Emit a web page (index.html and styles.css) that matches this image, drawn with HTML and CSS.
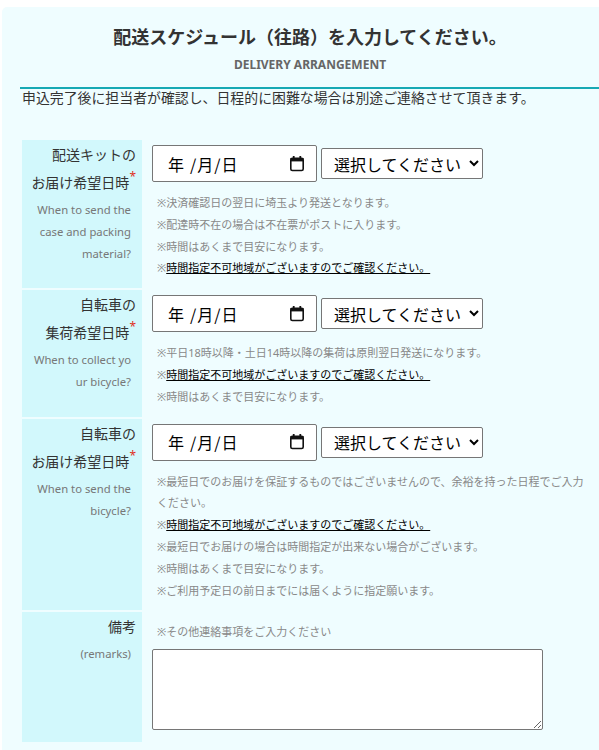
FILE: index.html
```html
<!DOCTYPE html>
<html lang="ja">
<head>
<meta charset="utf-8">
<title>配送スケジュール</title>
<link rel="stylesheet" href="styles.css">
</head>
<body>
<div class="panel">
  <header class="head">
    <h2 class="title">配送スケジュール（往路）を入力してください。</h2>
    <p class="sub">DELIVERY ARRANGEMENT</p>
  </header>
  <p class="intro">申込完了後に担当者が確認し、日程的に困難な場合は別途ご連絡させて頂きます。</p>

  <div class="rows">
    <div class="row">
      <div class="label">
        <p class="ja">配送キットの<br>お届け希望日時<span class="req">*</span></p>
        <p class="en">When to send the<br>case and packing<br>material?</p>
      </div>
      <div class="field">
        <div class="controls">
          <div class="date" role="textbox"><span class="date-text"><span class="seg seg-y">年</span><span class="slash">/</span><span class="seg">月</span><span class="slash">/</span><span class="seg">日</span></span><svg class="cal" viewBox="0 0 16 17" width="16" height="17"><rect x="1.8" y="3.3" width="12.4" height="12.2" rx="1.6" fill="none" stroke="#111" stroke-width="1.6"/><rect x="1.5" y="3" width="13" height="3.4" fill="#111"/><rect x="3.8" y="1" width="1.8" height="3" fill="#111"/><rect x="10.4" y="1" width="1.8" height="3" fill="#111"/></svg></div>
          <select class="sel"><option>選択してください</option></select>
        </div>
        <ul class="notes">
          <li>※決済確認日の翌日に埼玉より発送となります。</li>
          <li>※配達時不在の場合は不在票がポストに入ります。</li>
          <li>※時間はあくまで目安になります。</li>
          <li>※<a class="link" href="#">時間指定不可地域がございますのでご確認ください。 </a></li>
        </ul>
      </div>
    </div>

    <div class="row">
      <div class="label">
        <p class="ja">自転車の<br>集荷希望日時<span class="req">*</span></p>
        <p class="en">When to collect yo<br>ur bicycle?</p>
      </div>
      <div class="field">
        <div class="controls">
          <div class="date" role="textbox"><span class="date-text"><span class="seg seg-y">年</span><span class="slash">/</span><span class="seg">月</span><span class="slash">/</span><span class="seg">日</span></span><svg class="cal" viewBox="0 0 16 17" width="16" height="17"><rect x="1.8" y="3.3" width="12.4" height="12.2" rx="1.6" fill="none" stroke="#111" stroke-width="1.6"/><rect x="1.5" y="3" width="13" height="3.4" fill="#111"/><rect x="3.8" y="1" width="1.8" height="3" fill="#111"/><rect x="10.4" y="1" width="1.8" height="3" fill="#111"/></svg></div>
          <select class="sel"><option>選択してください</option></select>
        </div>
        <ul class="notes">
          <li>※平日18時以降・土日14時以降の集荷は原則翌日発送になります。</li>
          <li>※<a class="link" href="#">時間指定不可地域がございますのでご確認ください。 </a></li>
          <li>※時間はあくまで目安になります。</li>
        </ul>
      </div>
    </div>

    <div class="row">
      <div class="label">
        <p class="ja">自転車の<br>お届け希望日時<span class="req">*</span></p>
        <p class="en">When to send the<br>bicycle?</p>
      </div>
      <div class="field">
        <div class="controls">
          <div class="date" role="textbox"><span class="date-text"><span class="seg seg-y">年</span><span class="slash">/</span><span class="seg">月</span><span class="slash">/</span><span class="seg">日</span></span><svg class="cal" viewBox="0 0 16 17" width="16" height="17"><rect x="1.8" y="3.3" width="12.4" height="12.2" rx="1.6" fill="none" stroke="#111" stroke-width="1.6"/><rect x="1.5" y="3" width="13" height="3.4" fill="#111"/><rect x="3.8" y="1" width="1.8" height="3" fill="#111"/><rect x="10.4" y="1" width="1.8" height="3" fill="#111"/></svg></div>
          <select class="sel"><option>選択してください</option></select>
        </div>
        <ul class="notes">
          <li>※最短日でのお届けを保証するものではございませんので、余裕を持った日程でご入力ください。</li>
          <li>※<a class="link" href="#">時間指定不可地域がございますのでご確認ください。 </a></li>
          <li>※最短日でお届けの場合は時間指定が出来ない場合がございます。</li>
          <li>※時間はあくまで目安になります。</li>
          <li>※ご利用予定日の前日までには届くように指定願います。</li>
        </ul>
      </div>
    </div>

    <div class="row">
      <div class="label">
        <p class="ja">備考</p>
        <p class="en">(remarks)</p>
      </div>
      <div class="field field-remarks">
        <p class="hint">※その他連絡事項をご入力ください</p>
        <textarea class="remarks"></textarea>
      </div>
    </div>
  </div>
</div>
</body>
</html>
```

FILE: styles.css
```css
html, body {
  margin: 0;
  padding: 0;
  overflow: hidden;
  background: #ffffff;
}

body {
  font-family: "Noto Sans", "Noto Sans CJK JP", sans-serif;
  color: #333333;
}

.panel {
  margin: 7px 0 0 2px;
  width: 620px;
  min-height: 760px;
  background: #effdff;
  border-radius: 5px 0 0 0;
  padding-top: 18px;
  box-sizing: border-box;
}

.head {
  margin-left: 18px;
  padding-bottom: 14px;
  border-bottom: 2px solid #17a9b4;
}

.title {
  margin: 0;
  padding-right: 22px;
  text-align: center;
  font-size: 18px;
  line-height: 24px;
  font-weight: bold;
  color: #333333;
}

.sub {
  margin: 8px 0 0 0;
  padding-right: 22px;
  text-align: center;
  font-size: 12px;
  line-height: 16px;
  font-weight: bold;
  color: #666666;
}

.intro {
  margin: -1px 0 0 20px;
  font-size: 13.9px;
  line-height: 20px;
  color: #333333;
}

.rows {
  margin: 32px 0 0 20px;
  width: 568px;
  display: flex;
  flex-direction: column;
  gap: 2px;
}

.row {
  display: grid;
  grid-template-columns: 120px 1fr;
  column-gap: 10px;
}

.label {
  background: #d2f8fc;
  text-align: right;
  padding: 1px 6px 0 0;
}

.ja {
  margin: 0;
  font-size: 14px;
  line-height: 28px;
  color: #333333;
}

.req {
  color: #e0301e;
  font-size: 12px;
  vertical-align: 7px;
  line-height: 0;
}

.en {
  margin: 2px 0 0 0;
  padding-right: 5px;
  font-size: 11.3px;
  line-height: 22px;
  color: #777777;
}

.field {
  padding: 5px 0 9px 0;
}

.controls {
  display: flex;
  align-items: center;
  gap: 4px;
}

.date {
  box-sizing: border-box;
  width: 165px;
  height: 37px;
  display: flex;
  align-items: center;
  justify-content: space-between;
  padding: 0 11px 0 15px;
  font-family: "Noto Sans CJK JP", sans-serif;
  font-size: 16px;
  color: #000000;
  background: #ffffff;
  border: 1px solid #767676;
  border-radius: 2px;
}

.date-text {
  display: flex;
  align-items: center;
}

.seg-y {
  margin-right: 5px;
}

.slash {
  margin: 0 1px;
}

.cal {
  display: block;
  margin-top: -1px;
}

.sel {
  box-sizing: border-box;
  width: 162px;
  height: 31px;
  margin: 0;
  padding: 0 2px 0 8px;
  font-family: "Noto Sans CJK JP", sans-serif;
  font-size: 16px;
  color: #000000;
  background: #ffffff;
  border: 1px solid #767676;
  border-radius: 2px;
}

.notes {
  list-style: none;
  margin: 10px 0 0 0;
  padding: 0 0 0 5px;
  font-size: 11px;
  line-height: 21.8px;
  color: #888888;
}

.link {
  color: #000000;
  text-decoration: underline;
}

.field-remarks {
  padding: 9px 0 12px 0;
}

.hint {
  margin: 0;
  padding-left: 5px;
  font-size: 11px;
  line-height: 22px;
  color: #888888;
}

.remarks {
  display: block;
  box-sizing: border-box;
  width: 391px;
  height: 81px;
  margin: 6px 0 0 0;
  background: #ffffff;
  border: 1px solid #767676;
  border-radius: 2px;
}
```
